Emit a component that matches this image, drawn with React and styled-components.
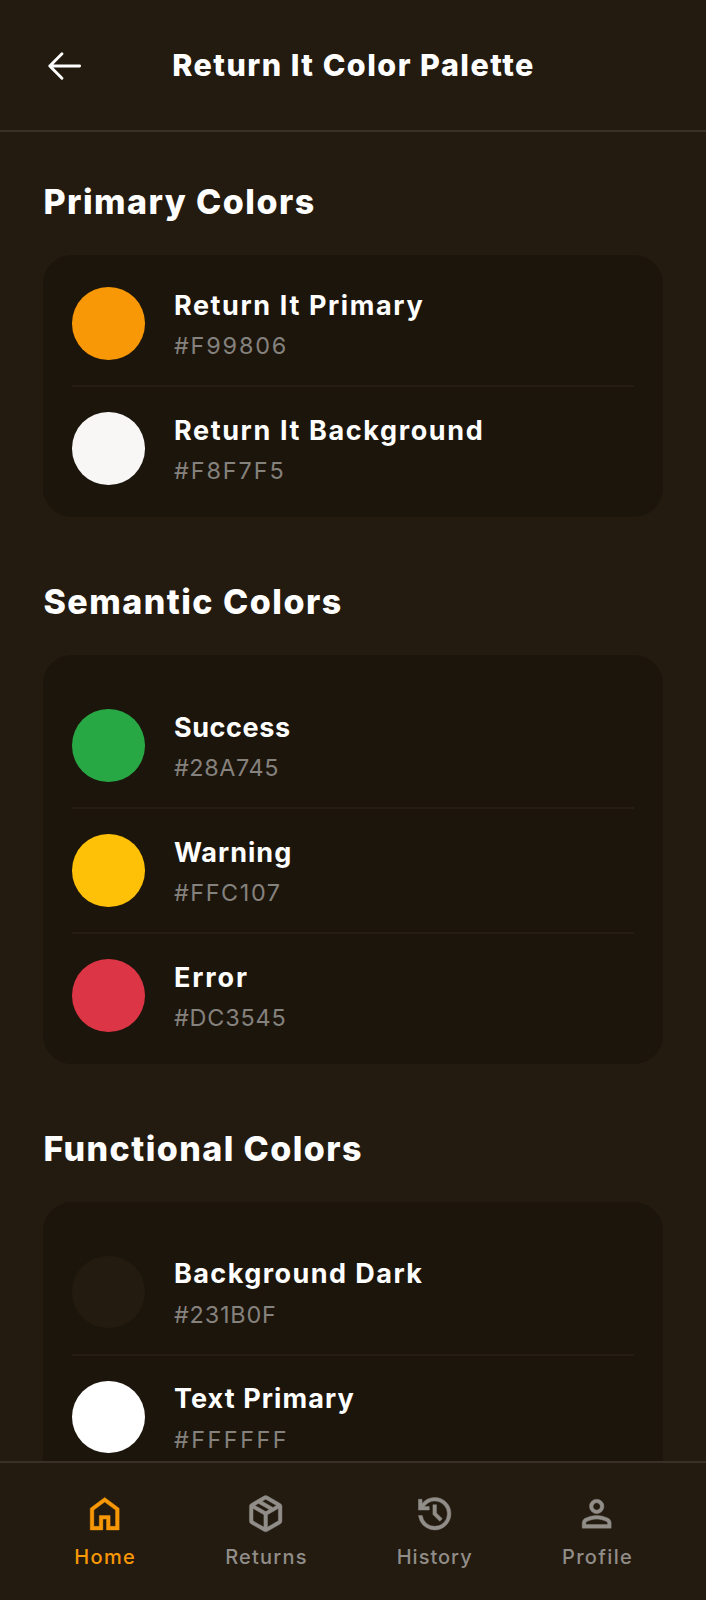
import React from "react";
import styled, { createGlobalStyle } from "styled-components";

const GlobalStyle = createGlobalStyle`
  * { box-sizing: border-box; }
  body {
    margin: 0;
    background: #231b10;
    color: #fff;
    font-family: Inter, "Liberation Sans", sans-serif;
  }
`;

const Screen = styled.div`
  display: flex;
  flex-direction: column;
  width: 100%;
  height: 1600px;
  overflow: hidden;
  background: #231b10;
`;

const Header = styled.header`
  display: grid;
  grid-template-columns: 43.4px 1fr 43.4px;
  align-items: center;
  flex: none;
  height: 132px;
  padding: 0 43.4px;
  border-bottom: 2px solid #393127;
`;

const BackButton = styled.button`
  display: flex;
  padding: 1px 0 0;
  border: 0;
  background: none;
  color: #fff;
`;

const Title = styled.h1`
  margin: 0;
  padding-left: 1px;
  text-align: center;
  font-size: 30.5px;
  font-weight: 800;
  line-height: 40px;
  letter-spacing: 1.48px;
  white-space: nowrap;
`;

const Main = styled.main`
  display: flex;
  flex-direction: column;
  gap: 58px;
  flex: 1;
  min-height: 0;
  overflow: hidden;
  padding: 43.2px 43.4px 0;
`;

const SectionBlock = styled.section`
  flex: none;
`;

const SectionTitle = styled.h2`
  margin: 0 0 27.4px;
  padding-top: 1.6px;
  font-size: 34px;
  font-weight: 800;
  line-height: 50.6px;
  letter-spacing: ${(p) => p.$tracking}px;
`;

const Card = styled.div`
  padding: 29px;
  border-radius: 29px;
  background: #1c150c;
`;

const Row = styled.div`
  display: flex;
  align-items: center;
  gap: 29px;
  padding-top: ${(p) => (p.$flush ? 0 : 21.7)}px;
  padding-bottom: ${(p) => (p.$last ? 0 : 21.7)}px;
  border-bottom: ${(p) => (p.$last ? "0" : "2px solid #261e16")};
`;

const Swatch = styled.div`
  flex: none;
  width: 72.5px;
  height: 72.5px;
  border-radius: 50%;
  background: ${(p) => p.$color};
`;

const Label = styled.div`
  display: flex;
  flex-direction: column;
`;

const Name = styled.span`
  font-size: 27px;
  font-weight: 700;
  line-height: 43.6px;
  letter-spacing: ${(p) => p.$tracking}px;
`;

const Hex = styled.span`
  padding-top: 2px;
  color: #85817d;
  font-size: 23.4px;
  line-height: 34px;
  letter-spacing: ${(p) => p.$tracking}px;
`;

const TabBar = styled.nav`
  display: flex;
  justify-content: space-around;
  flex: none;
  height: 139.5px;
  padding: 29px 29px 0;
  border-top: 2px solid #393127;
  background: #231b10;
`;

const Tab = styled.a`
  display: flex;
  flex-direction: column;
  align-items: center;
  gap: 8px;
  color: ${(p) => (p.$active ? "#f99806" : "#918d88")};
`;

const TabLabel = styled.span`
  margin-right: -${(p) => p.$tracking}px;
  font-size: 20px;
  font-weight: 500;
  line-height: 29px;
  letter-spacing: ${(p) => p.$tracking}px;
`;

const TabIcon = styled.svg`
  display: block;
  width: 43.4px;
  height: 43.4px;
  fill: currentColor;
  stroke: currentColor;
  stroke-width: 9;
`;

const ArrowIcon = styled.svg`
  width: 44px;
  height: 44px;
  fill: none;
  stroke: currentColor;
  stroke-width: 17;
  stroke-linecap: round;
  stroke-linejoin: round;
`;

const sections = [
  {
    title: "Primary Colors",
    tracking: 1.46,
    flush: true,
    colors: [
      { name: "Return It Primary", nameTracking: 1.62, hex: "#F99806", hexTracking: 1.85 },
      { name: "Return It Background", nameTracking: 1.63, hex: "#F8F7F5", hexTracking: 1.95 },
    ],
  },
  {
    title: "Semantic Colors",
    tracking: 1.48,
    colors: [
      { name: "Success", nameTracking: 0.6, hex: "#28A745", hexTracking: 0.6 },
      { name: "Warning", nameTracking: 1, hex: "#FFC107", hexTracking: 1.6 },
      { name: "Error", nameTracking: 1.9, hex: "#DC3545", hexTracking: 0.85 },
    ],
  },
  {
    title: "Functional Colors",
    tracking: 1.42,
    colors: [
      { name: "Background Dark", nameTracking: 1.45, hex: "#231B0F", hexTracking: 0.85 },
      { name: "Text Primary", nameTracking: 1.1, hex: "#FFFFFF", hexTracking: 2.5 },
    ],
  },
];

const tabs = [
  {
    label: "Home",
    tracking: 1.4,
    active: true,
    path: "M240-200h120v-240h240v240h120v-360L480-740 240-560v360Zm-80 80v-480l320-240 320 240v480H520v-240h-80v240H160Z",
  },
  {
    label: "Returns",
    tracking: 1.2,
    path: "M440-183v-274L200-596v274l240 139Zm80 0 240-139v-274L520-457v274Zm-80 92L160-252q-19-11-29.5-29T120-321v-318q0-22 10.5-40t29.5-29l280-161q19-11 40-11t40 11l280 161q19 11 29.5 29t10.5 40v318q0 22-10.5 40T800-252L520-91q-19 11-40 11t-40-11Zm200-528 77-44-237-137-78 45 238 136Zm-160 93 78-45-237-137-78 45 237 137Z",
  },
  {
    label: "History",
    tracking: 1,
    path: "M480-120q-138 0-240.5-91.5T122-440h82q14 104 92.5 172T480-200q117 0 198.5-81.5T760-480q0-117-81.5-198.5T480-760q-69 0-129 32t-101 88h110v80H120v-240h80v94q51-64 124.5-99T480-840q75 0 140.5 28.5t114 77q48.5 48.5 77 114T840-480q0 75-28.5 140.5t-77 114q-48.5 48.5-114 77T480-120Zm112-192L440-464v-216h80v184l128 128-56 56Z",
  },
  {
    label: "Profile",
    tracking: 1.35,
    path: "M480-480q-66 0-113-47t-47-113q0-66 47-113t113-47q66 0 113 47t47 113q0 66-47 113t-113 47ZM160-160v-112q0-34 17.5-62.5T224-378q62-31 126-46.5T480-440q66 0 130 15.5T736-378q29 15 46.5 43.5T800-272v112H160Zm80-80h480v-32q0-11-5.5-20T700-306q-54-27-109-40.5T480-360q-56 0-111 13.5T260-306q-9 5-14.5 14t-5.5 20v32Zm240-320q33 0 56.5-23.5T560-640q0-33-23.5-56.5T480-720q-33 0-56.5 23.5T400-640q0 33 23.5 56.5T480-560Z",
  },
];

export default function App() {
  return (
    <Screen>
      <GlobalStyle />
      <Header>
        <BackButton aria-label="Back">
          <ArrowIcon viewBox="0 0 256 256">
            <path d="M216 128H40M112 56 40 128l72 72" />
          </ArrowIcon>
        </BackButton>
        <Title>Return It Color Palette</Title>
      </Header>
      <Main>
        {sections.map((section) => (
          <SectionBlock key={section.title}>
            <SectionTitle $tracking={section.tracking}>{section.title}</SectionTitle>
            <Card>
              {section.colors.map((color, i) => (
                <Row
                  key={color.name}
                  $flush={section.flush && i === 0}
                  $last={section.title !== "Functional Colors" && i === section.colors.length - 1}
                >
                  <Swatch $color={color.hex} />
                  <Label>
                    <Name $tracking={color.nameTracking}>{color.name}</Name>
                    <Hex $tracking={color.hexTracking}>{color.hex}</Hex>
                  </Label>
                </Row>
              ))}
            </Card>
          </SectionBlock>
        ))}
      </Main>
      <TabBar>
        {tabs.map((tab) => (
          <Tab key={tab.label} $active={tab.active}>
            <TabIcon viewBox="0 -960 960 960">
              <path d={tab.path} />
            </TabIcon>
            <TabLabel $tracking={tab.tracking}>{tab.label}</TabLabel>
          </Tab>
        ))}
      </TabBar>
    </Screen>
  );
}
